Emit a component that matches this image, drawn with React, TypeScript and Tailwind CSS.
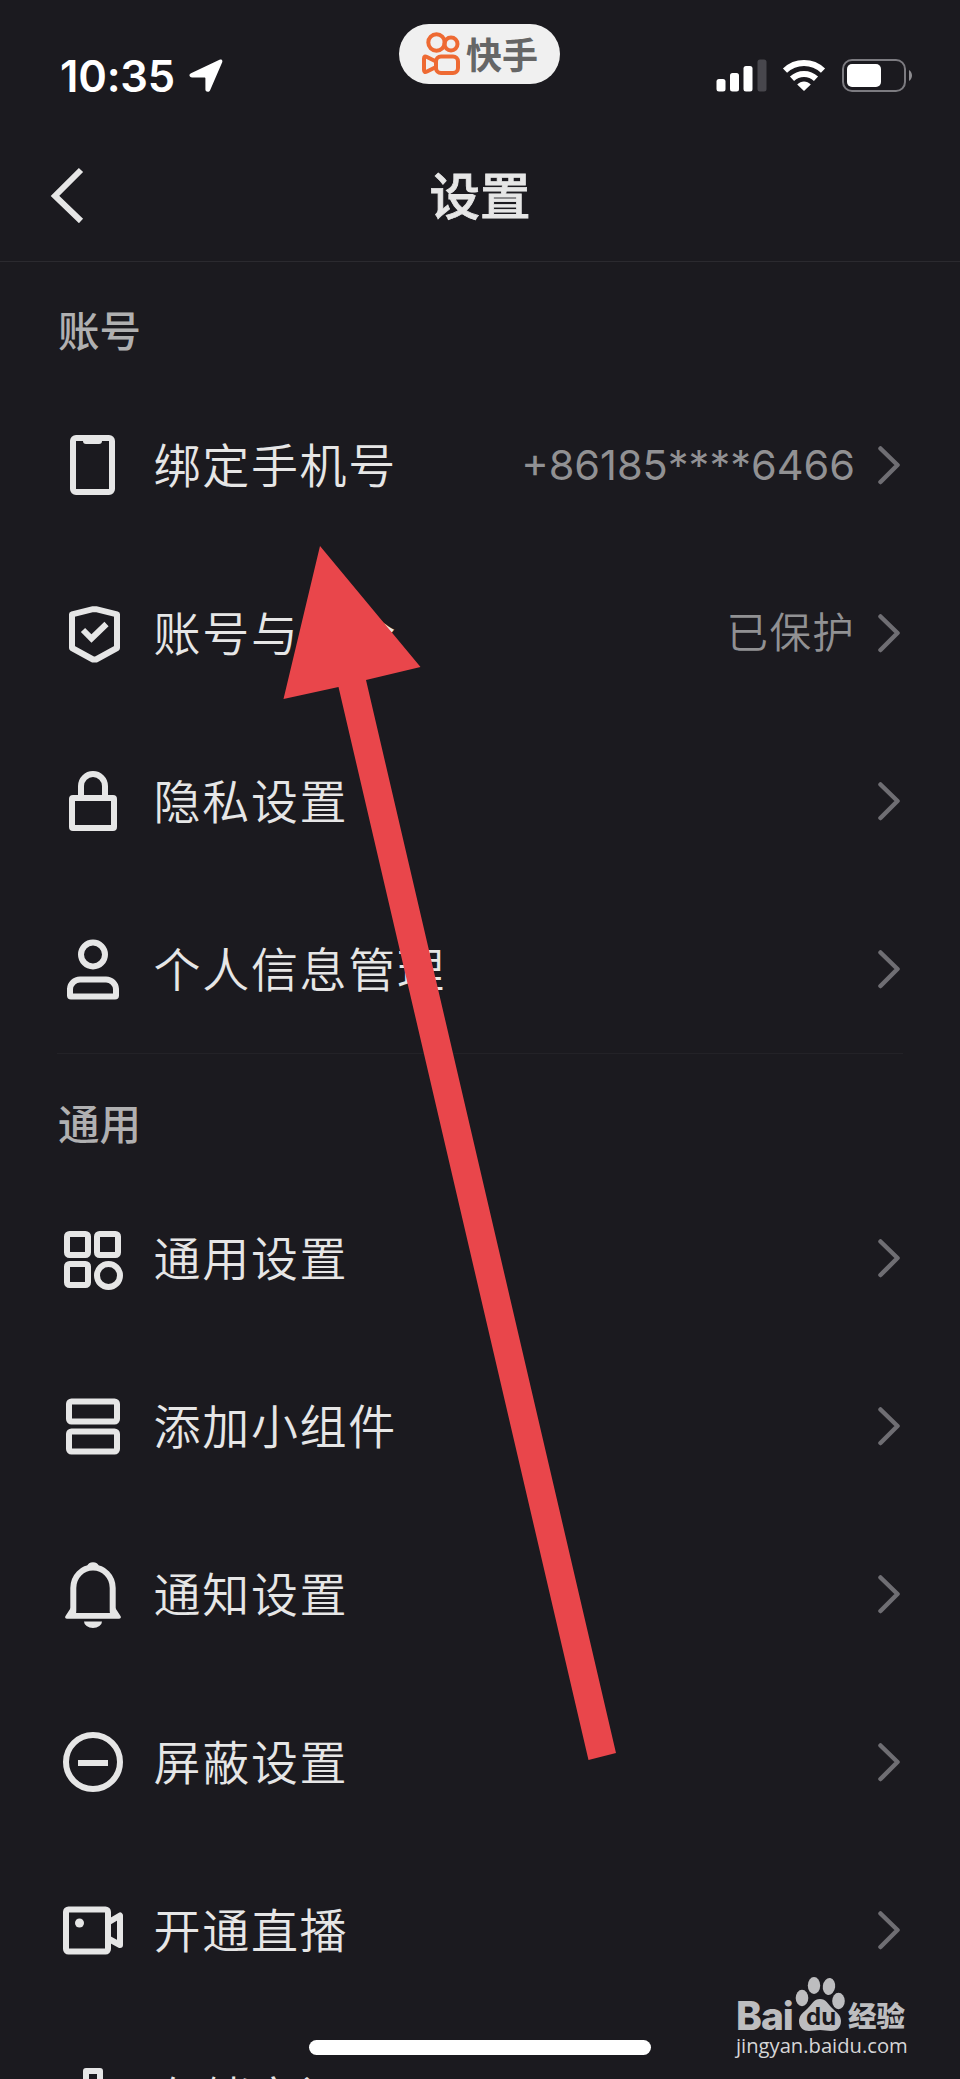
import type { ReactNode } from 'react';
import { clsx } from 'clsx';

interface SettingItem {
  label: string;
  icon: ReactNode;
  value?: string;
  numeric?: boolean;
}

interface SettingGroup {
  title: string;
  items: SettingItem[];
}

function Icon({ children }: { children: ReactNode }) {
  return (
    <svg
      viewBox="0 0 72 72"
      className="w-[72px] h-[72px] flex-shrink-0"
      fill="none"
      stroke="#e6e6e6"
      strokeWidth={6}
    >
      {children}
    </svg>
  );
}

const PhoneIcon = (
  <Icon>
    <rect x="16" y="9" width="39" height="54" rx="3" />
    <path d="M26 11h19v1a3 3 0 0 1-3 3H29a3 3 0 0 1-3-3z" fill="#e6e6e6" stroke="none" />
  </Icon>
);

const ShieldIcon = (
  <Icon>
    <path d="M15 17.300 36 12.200h3l21 5.100V51L39 62.500h-3L15 51z" strokeLinejoin="round" />
    <path d="M26 33l8.500 8.500 15-14.500" />
  </Icon>
);

const LockIcon = (
  <Icon>
    <rect x="15" y="33" width="42" height="30" rx="1" />
    <path d="M24 33V21a12 12 0 0 1 24 0v12" />
  </Icon>
);

const PersonIcon = (
  <Icon>
    <circle cx="36" cy="21.500" r="12" />
    <path d="M13 62.500V56a10 10 0 0 1 10-9.500h26A10 10 0 0 1 59 56v6.500a1 1 0 0 1-1 1H14a1 1 0 0 1-1-1z" />
  </Icon>
);

const GridIcon = (
  <Icon>
    <rect x="10" y="12" width="21" height="21" rx="2.500" />
    <rect x="40" y="12" width="21" height="21" rx="2.500" />
    <rect x="10" y="42" width="21" height="21" rx="2.500" />
    <circle cx="51.500" cy="53.500" r="11.500" />
  </Icon>
);

const WidgetIcon = (
  <Icon>
    <rect x="12" y="11.500" width="48" height="20" rx="2.500" />
    <rect x="12" y="41.500" width="48" height="20" rx="2.500" />
  </Icon>
);

const BellIcon = (
  <Icon>
    <path d="M16 56c0-1 .3-2 .3-4V30a19.700 20.500 0 0 1 39.400 0V52c0 2 .3 3 .3 4" />
    <path d="M30 8.500a6.300 6 0 0 1 12 0zM27 63.500h18a9 6.500 0 0 1-18 0zM14 49.500l-5.500 8.500c-1 1.500 0 2.700 1.500 2.700h52c1.500 0 2.500-1.200 1.500-2.700l-5.500-8.500V55H14z" fill="#e6e6e6" stroke="none" />
  </Icon>
);

const BlockIcon = (
  <Icon>
    <circle cx="36" cy="36" r="27" />
    <path d="M21 37h30" />
  </Icon>
);

const VideoIcon = (
  <Icon>
    <rect x="9" y="15.500" width="42" height="42" rx="2.500" />
    <circle cx="22.500" cy="29" r="4.500" fill="#e6e6e6" stroke="none" />
    <path d="M52 28l11-6.500v29.500L52 45" strokeLinejoin="round" />
  </Icon>
);

const StorageIcon = (
  <Icon>
    <path d="M29 30V9h14v21" strokeLinejoin="round" />
  </Icon>
);

const groups: SettingGroup[] = [
  {
    title: '账号',
    items: [
      { label: '绑定手机号', icon: PhoneIcon, value: '+86185****6466', numeric: true },
      { label: '账号与安全', icon: ShieldIcon, value: '已保护' },
      { label: '隐私设置', icon: LockIcon },
      { label: '个人信息管理', icon: PersonIcon },
    ],
  },
  {
    title: '通用',
    items: [
      { label: '通用设置', icon: GridIcon },
      { label: '添加小组件', icon: WidgetIcon },
      { label: '通知设置', icon: BellIcon },
      { label: '屏蔽设置', icon: BlockIcon },
      { label: '开通直播', icon: VideoIcon },
      { label: '存储空间', icon: StorageIcon },
    ],
  },
];

function StatusBar() {
  return (
    <div className="relative h-[132px] flex-shrink-0 flex items-start justify-between pl-[60px] pr-[48px]">
      <div className="flex items-start">
        <span className="mt-[51px] font-[Inter] font-semibold text-[43.5px] tracking-[-0.2px] leading-[51px] text-white">
          10:35
        </span>
        <svg viewBox="0 0 34 34" className="mt-[59px] ml-[14px] w-[34px] h-[34px]" fill="#fff">
          <path d="M2 14.300 30.500.800c2-.8 3.400.4 2.700 2.500L21 31.600c-1 2-4.600 1.600-4.600-1V19.500c0-.7-.3-1-1-1H3.200C.2 18.500-.6 15.500 2 14.300z" />
        </svg>
      </div>

      <div className="mt-[59px] flex items-start">
        <svg viewBox="0 0 52 34" className="w-[52px] h-[34px]" fill="#fff">
          <rect x=".5" y="20" width="9" height="12.500" rx="2.500" />
          <rect x="14" y="14" width="9" height="18.500" rx="2.500" />
          <rect x="27.500" y="7" width="9" height="25.500" rx="2.500" />
          <rect x="41.500" y=".5" width="9" height="32" rx="2.500" fill="#48474d" />
        </svg>
        <svg viewBox="0 0 44 34" className="ml-[14px] w-[44px] h-[34px]" fill="none" stroke="#fff" strokeWidth="6">
          <path d="M3 11.700a27.500 27.500 0 0 1 38 0" />
          <path d="M10 19.700a17.500 17.500 0 0 1 24 0" />
          <path d="M22 32l-6.800-6.500c4-4 9.600-4 13.600 0z" fill="#fff" stroke="none" />
        </svg>
        <svg viewBox="0 0 70 34" className="ml-[16px] w-[70px] h-[34px]" fill="none">
          <rect x="1" y="1" width="62" height="31" rx="9" stroke="#7c7b80" strokeWidth="2" />
          <rect x="5" y="5" width="34" height="23" rx="5" fill="#fff" />
          <path d="M67 11c4 2.500 4 8.500 0 11z" fill="#8d8c90" />
        </svg>
      </div>

      {/* Return-to-app pill */}
      <div className="absolute left-[399px] top-[24px] w-[161px] h-[60px] rounded-full bg-[#f0f0f0] flex items-center pl-[23px]">
        <svg viewBox="0 0 38 44" className="w-[38px] h-[44px]" fill="none" stroke="#ee6a33" strokeWidth="4">
          <circle cx="14.500" cy="10.500" r="8.200" />
          <circle cx="29" cy="12" r="6.500" />
          <rect x="14" y="24.500" width="22" height="16.500" rx="5" />
          <path d="M13 29l-8-4c-2-1-3-.5-3 1.500v11.500c0 2 1 2.500 3 1.500l8-4" strokeLinejoin="round" />
        </svg>
        <span className="ml-[6px] mb-[3px] font-bold text-[36px] leading-none text-[#666]">快手</span>
      </div>
    </div>
  );
}

function Header() {
  return (
    <header className="h-[130px] flex-shrink-0 flex items-center justify-between px-[50px] border-b border-[#2b2a2f]">
      <svg viewBox="0 0 34 56" className="w-[34px] h-[56px] mb-[4px]" fill="none" stroke="#e6e6e6" strokeWidth="6">
        <path d="M31 3 5 29l26 25" />
      </svg>
      <h1 className="mb-[7px] font-medium text-[50.5px] leading-none text-[#e6e6e6] [-webkit-text-stroke:0.8px_#e6e6e6]">
        设置
      </h1>
      <span className="w-[34px]" />
    </header>
  );
}

function SettingRow({ item }: { item: SettingItem }) {
  return (
    <div className="h-[168px] flex-shrink-0 flex items-center pl-[57px] pr-[59px]">
      {item.icon}
      <span className="ml-[24.5px] mb-[5px] text-[47px] tracking-[1.700px] leading-none whitespace-nowrap text-[#e6e6e6] font-[350]">
        {item.label}
      </span>
      {item.value && (
        <span
          className={clsx(
            'ml-auto mr-[22px] mt-[2px] leading-none text-[#919193]',
            item.numeric
              ? 'font-[Inter] text-[41.5px]'
              : "font-[Inter,'Noto_Sans_CJK_SC',sans-serif] font-[350] text-[41.5px] tracking-[1.300px]"
          )}
        >
          {item.value}
        </span>
      )}
      <svg
        viewBox="0 0 24 40"
        className={clsx('w-6 h-10', !item.value && 'ml-auto')}
        fill="none"
        stroke="#6f6e73"
        strokeWidth="4.500"
        strokeLinecap="round"
        strokeLinejoin="round"
      >
        <path d="M3.500 3.500 20.500 20l-17 17" />
      </svg>
    </div>
  );
}

function PawLogo() {
  return (
    <div className="relative w-[50px] h-[56px]">
      <svg viewBox="0 0 50 56" className="w-[50px] h-[56px]" fill="#bdbdbf">
        <ellipse cx="7" cy="22" rx="6.300" ry="8.300" />
        <ellipse cx="19" cy="9.500" rx="6.200" ry="8.500" />
        <ellipse cx="34" cy="10.500" rx="6.200" ry="8.500" transform="rotate(8 34 10.500)" />
        <ellipse cx="43.500" cy="25" rx="6.300" ry="8.300" />
        <path d="M25 23c6 0 8 5 12 9s9 7 9 13c0 7-5 10-10 10-4 0-7-1-11-1s-7 1-11 1c-5 0-10-3-10-10 0-6 5-9 9-13s6-9 12-9z" />
      </svg>
      <span className="absolute left-[11px] top-[29px] font-[Inter] font-bold text-[24px] leading-none text-[#1b1a1f]">
        du
      </span>
    </div>
  );
}

function Watermark() {
  return (
    <div className="absolute left-[736px] top-[1976px] text-[#bdbdbf]">
      <div className="flex items-end h-[56px]">
        <span className="w-[59px] font-[Inter] font-extrabold text-[39px] tracking-[-1px] leading-[32px]">Bai</span>
        <PawLogo />
        <span className="ml-[3px] mb-[2px] font-black text-[28.5px] leading-[30px]">经验</span>
      </div>
      <p className="mt-[2px] font-['Open_Sans'] text-[20.2px] leading-[22px] text-[#d6d6d7]">jingyan.baidu.com</p>
    </div>
  );
}

export default function App() {
  return (
    <div className="relative w-[960px] h-[2079px] overflow-hidden flex flex-col bg-[#1b1a1f] font-['Noto_Sans_CJK_SC',sans-serif]">
      <StatusBar />
      <Header />

      {groups.map((group, i) => (
        <section key={group.title} className="flex-shrink-0 flex flex-col">
          {i > 0 && <hr className="mx-[57px] mb-px border-[#232227]" />}
          <h2 className="h-[119px] pl-[58px] pt-[45px] font-medium text-[41.5px] leading-[44px] text-[#b0b0b1]">{group.title}</h2>
          {group.items.map((item) => (
            <SettingRow key={item.label} item={item} />
          ))}
        </section>
      ))}

      {/* Pointer towards the phone number row */}
      <svg viewBox="0 0 960 2079" className="absolute inset-0 w-[960px] h-[2079px] pointer-events-none">
        <path d="M320 546 420.500 667 366 680 616 1753 588.500 1760 338.500 687 283.500 699z" fill="#e9464b" />
      </svg>

      <div className="absolute left-[309px] top-[2040px] w-[342px] h-[15px] rounded-full bg-white" />
      <Watermark />
    </div>
  );
}
